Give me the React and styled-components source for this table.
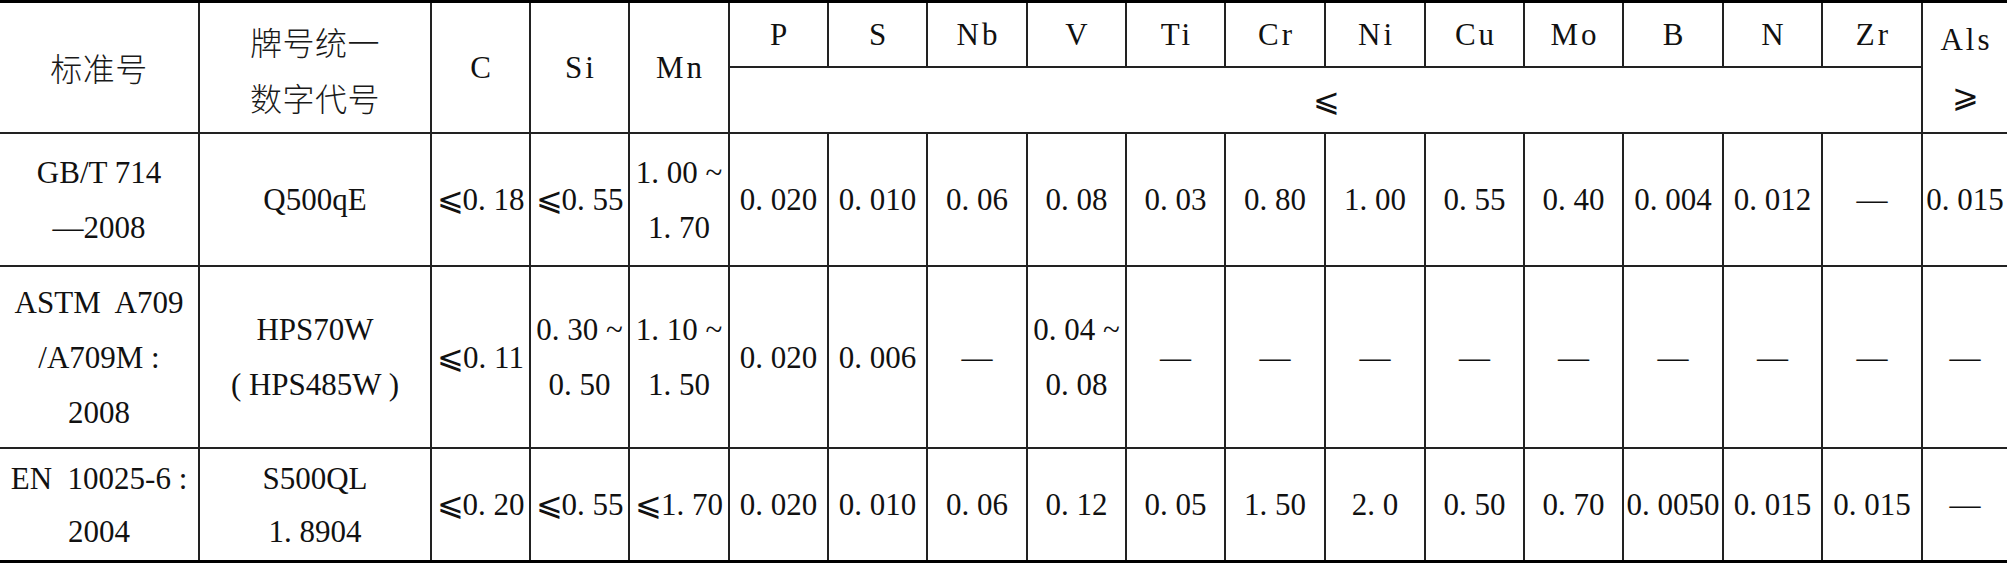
import React from "react";
import styled, { createGlobalStyle } from "styled-components";

const Global = createGlobalStyle`
  html, body {
    margin: 0;
    padding: 0;
    background: #ffffff;
    overflow: hidden;
  }
`;

const Sheet = styled.div`
  width: 2007px;
  display: grid;
  grid-template-columns: 200px 232px 99px 99px 100px 99px 99px 100px 99px 99px 100px 100px 99px 99px 100px 99px 100px 84px;
  grid-template-rows: 65px 66px 133px 182px 111px;
  border-top: 3px solid #000;
  border-bottom: 3px solid #000;
  background: #fff;
  color: #111;
  font-family: "Liberation Serif", "Times New Roman", Times, serif;
  font-size: 31px;
`;

const Cell = styled.div`
  box-sizing: border-box;
  display: flex;
  flex-direction: column;
  align-items: center;
  justify-content: center;
  text-align: center;
  white-space: pre;
  line-height: ${(p) => p.$lh || 55}px;
  border-right: ${(p) => (p.$last ? "none" : "2px solid #222")};
  border-bottom: ${(p) => (p.$bottom ? "none" : "2px solid #222")};
  grid-row: ${(p) => (p.$rows ? `span ${p.$rows}` : "auto")};
  grid-column: ${(p) => (p.$cols ? `span ${p.$cols}` : "auto")};
  padding-top: ${(p) => p.$shift || 0}px;
  overflow: visible;
`;

const Han = styled.span`
  font-family: "Noto Sans CJK SC", "Noto Sans CJK JP", sans-serif;
  font-size: 32px;
  font-weight: 300;
  color: #1a1a1a;
  letter-spacing: 0.5px;
`;

const Elem = styled.span`
  letter-spacing: 3px;
  margin-right: -3px;
`;

const Le = styled.span`
  font-family: "DejaVu Sans", sans-serif;
  font-weight: 200;
  font-size: 32px;
  margin-right: -1px;
`;

const Line = styled.span`
  display: block;
  white-space: pre;
`;

function renderText(t) {
  if (t.startsWith("≤") || t.startsWith("≥")) {
    const sym = t[0] === "≤" ? "⩽" : "⩾";
    return (
      <>
        <Le>{sym}</Le>
        {t.slice(1)}
      </>
    );
  }
  return t;
}

const elements = ["P", "S", "Nb", "V", "Ti", "Cr", "Ni", "Cu", "Mo", "B", "N", "Zr"];

const rows = [
  [
    ["GB/T 714", "—2008"],
    ["Q500qE"],
    "≤0. 18",
    "≤0. 55",
    ["1. 00 ~", "1. 70"],
    "0. 020",
    "0. 010",
    "0. 06",
    "0. 08",
    "0. 03",
    "0. 80",
    "1. 00",
    "0. 55",
    "0. 40",
    "0. 004",
    "0. 012",
    "—",
    "0. 015",
  ],
  [
    ["ASTM  A709", "/A709M :", "2008"],
    ["HPS70W", "( HPS485W )"],
    "≤0. 11",
    ["0. 30 ~", "0. 50"],
    ["1. 10 ~", "1. 50"],
    "0. 020",
    "0. 006",
    "—",
    ["0. 04 ~", "0. 08"],
    "—",
    "—",
    "—",
    "—",
    "—",
    "—",
    "—",
    "—",
    "—",
  ],
  [
    ["EN  10025-6 :", "2004"],
    ["S500QL", "1. 8904"],
    "≤0. 20",
    "≤0. 55",
    "≤1. 70",
    "0. 020",
    "0. 010",
    "0. 06",
    "0. 12",
    "0. 05",
    "1. 50",
    "2. 0",
    "0. 50",
    "0. 70",
    "0. 0050",
    "0. 015",
    "0. 015",
    "—",
  ],
];

export default function App() {
  return (
    <>
      <Global />
      <Sheet>
        <Cell $rows={2}>
          <Han>标准号</Han>
        </Cell>
        <Cell $rows={2} $lh={52} $shift={6}>
          <Line>
            <Han>牌号统一</Han>
          </Line>
          <Line>
            <Han>数字代号</Han>
          </Line>
        </Cell>
        <Cell $rows={2}>
          <Elem>C</Elem>
        </Cell>
        <Cell $rows={2}>
          <Elem>Si</Elem>
        </Cell>
        <Cell $rows={2}>
          <Elem>Mn</Elem>
        </Cell>
        {elements.map((e) => (
          <Cell key={e}>
            <Elem>{e}</Elem>
          </Cell>
        ))}
        <Cell $rows={2} $last $lh={57}>
          <Line>
            <Elem>Als</Elem>
          </Line>
          <Line>
            <Le>⩾</Le>
          </Line>
        </Cell>
        <Cell $cols={12}>
          <Le>⩽</Le>
        </Cell>
        {rows.map((row, ri) =>
          row.map((c, ci) => (
            <Cell
              key={`${ri}-${ci}`}
              $last={ci === row.length - 1}
              $bottom={ri === rows.length - 1}
              $lh={ri === 2 ? 53 : 55}
            >
              {(Array.isArray(c) ? c : [c]).map((l, li) => (
                <Line key={li}>{renderText(l)}</Line>
              ))}
            </Cell>
          ))
        )}
      </Sheet>
    </>
  );
}
